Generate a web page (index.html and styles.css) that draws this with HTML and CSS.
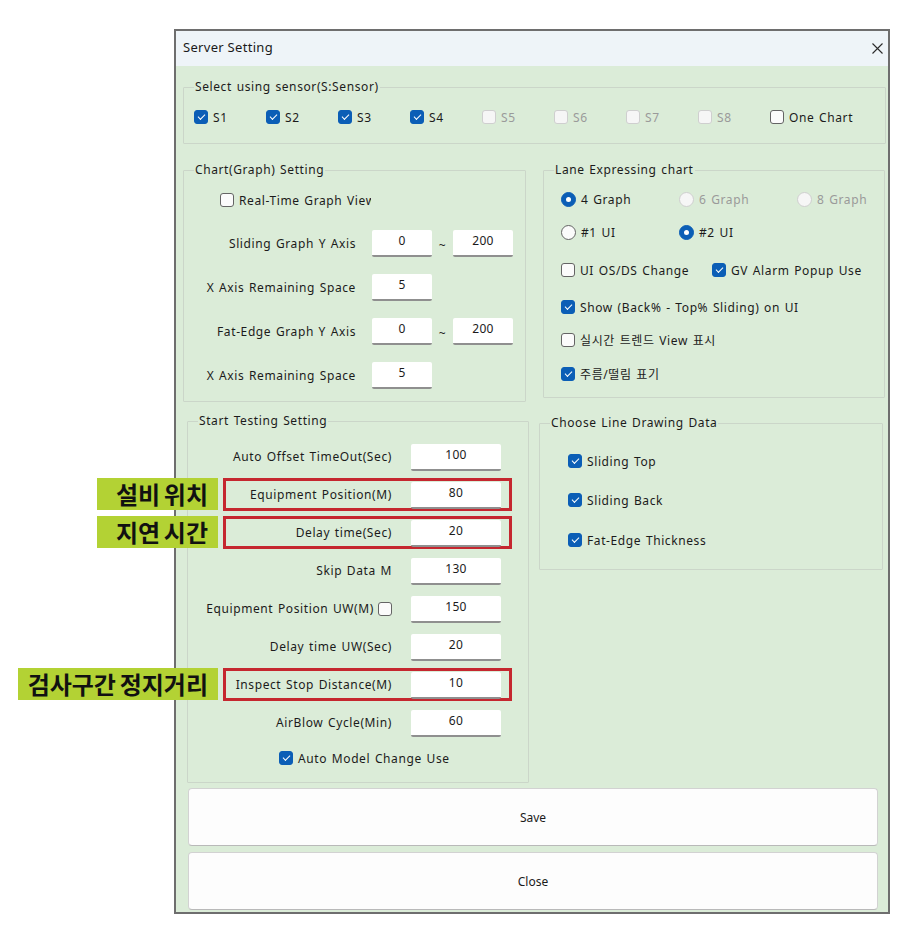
FILE: index.html
```html
<!DOCTYPE html>
<html lang="ko">
<head>
<meta charset="utf-8">
<title>Server Setting</title>
<link rel="stylesheet" href="styles.css">
</head>
<body>
<div class="window">
  <div class="titlebar">
    <span class="title">Server Setting</span>
    <svg class="close" width="11" height="11" viewBox="0 0 11 11"><path d="M0.5 0.5L10.5 10.5M10.5 0.5L0.5 10.5" stroke="#2b2b2b" stroke-width="1.1" fill="none"/></svg>
  </div>
  <div class="content">
    <fieldset class="group sensors">
      <legend>Select using sensor(S:Sensor)</legend>
      <div class="sensor-row">
        <label class="chk"><span class="box on"></span>S1</label>
        <label class="chk"><span class="box on"></span>S2</label>
        <label class="chk"><span class="box on"></span>S3</label>
        <label class="chk"><span class="box on"></span>S4</label>
        <label class="chk off"><span class="box"></span>S5</label>
        <label class="chk off"><span class="box"></span>S6</label>
        <label class="chk off"><span class="box"></span>S7</label>
        <label class="chk off"><span class="box"></span>S8</label>
        <label class="chk"><span class="box"></span>One Chart</label>
      </div>
    </fieldset>

    <div class="row2">
      <fieldset class="group chart">
        <legend>Chart(Graph) Setting</legend>
        <label class="chk realtime"><span class="box"></span><span class="clip">Real-Time Graph View</span></label>
        <div class="frow first">
          <span class="lbl">Sliding Graph Y Axis</span>
          <input class="field" value="0" readonly>
          <span class="tilde">~</span>
          <input class="field" value="200" readonly>
        </div>
        <div class="frow">
          <span class="lbl">X Axis Remaining Space</span>
          <input class="field" value="5" readonly>
        </div>
        <div class="frow">
          <span class="lbl">Fat-Edge Graph Y Axis</span>
          <input class="field" value="0" readonly>
          <span class="tilde">~</span>
          <input class="field" value="200" readonly>
        </div>
        <div class="frow">
          <span class="lbl">X Axis Remaining Space</span>
          <input class="field" value="5" readonly>
        </div>
      </fieldset>

      <fieldset class="group lane">
        <legend>Lane Expressing chart</legend>
        <div class="lrow radios r1">
          <label class="chk"><span class="radio on"></span>4 Graph</label>
          <label class="chk off"><span class="radio"></span>6 Graph</label>
          <label class="chk off"><span class="radio"></span>8 Graph</label>
        </div>
        <div class="lrow radios r2">
          <label class="chk"><span class="radio"></span>#1 UI</label>
          <label class="chk"><span class="radio on"></span>#2 UI</label>
        </div>
        <div class="lrow pair r3">
          <label class="chk"><span class="box"></span>UI OS/DS Change</label>
          <label class="chk"><span class="box on"></span>GV Alarm Popup Use</label>
        </div>
        <div class="lrow r4">
          <label class="chk"><span class="box on"></span>Show (Back% - Top% Sliding) on UI</label>
        </div>
        <div class="lrow r5">
          <label class="chk"><span class="box"></span>실시간 트렌드 View 표시</label>
        </div>
        <div class="lrow r6">
          <label class="chk"><span class="box on"></span>주름/떨림 표기</label>
        </div>
      </fieldset>
    </div>

    <div class="row3">
      <fieldset class="group testing">
        <legend>Start Testing Setting</legend>
        <div class="trow">
          <span class="lbl">Auto Offset TimeOut(Sec)</span>
          <input class="field" value="100" readonly>
        </div>
        <div class="trow hl">
          <span class="tag">설비 위치</span>
          <span class="lbl">Equipment Position(M)</span>
          <input class="field" value="80" readonly>
        </div>
        <div class="trow hl">
          <span class="tag">지연 시간</span>
          <span class="lbl">Delay time(Sec)</span>
          <input class="field" value="20" readonly>
        </div>
        <div class="trow">
          <span class="lbl">Skip Data M</span>
          <input class="field" value="130" readonly>
        </div>
        <div class="trow">
          <span class="lbl">Equipment Position UW(M)<span class="box"></span></span>
          <input class="field" value="150" readonly>
        </div>
        <div class="trow">
          <span class="lbl">Delay time UW(Sec)</span>
          <input class="field" value="20" readonly>
        </div>
        <div class="trow hl">
          <span class="tag">검사구간 정지거리</span>
          <span class="lbl">Inspect Stop Distance(M)</span>
          <input class="field" value="10" readonly>
        </div>
        <div class="trow">
          <span class="lbl">AirBlow Cycle(Min)</span>
          <input class="field" value="60" readonly>
        </div>
        <label class="chk automodel"><span class="box on"></span>Auto Model Change Use</label>
      </fieldset>

      <fieldset class="group lines">
        <legend>Choose Line Drawing Data</legend>
        <label class="chk d1"><span class="box on"></span>Sliding Top</label>
        <label class="chk d2"><span class="box on"></span>Sliding Back</label>
        <label class="chk d3"><span class="box on"></span>Fat-Edge Thickness</label>
      </fieldset>
    </div>

    <button class="btn save">Save</button>
    <button class="btn">Close</button>
  </div>
</div>
</body>
</html>
```

FILE: styles.css
```css
* { box-sizing: border-box; }

body {
  margin: 0;
  background: #ffffff;
  font-family: "Noto Sans", "Noto Sans CJK KR", sans-serif;
  font-size: 12px;
  letter-spacing: 0.6px;
  word-spacing: 1px;
  color: #1b1b1b;
}

.window {
  width: 716px;
  margin: 29px 0 0 174px;
  border: 2px solid #6e6e6e;
  background: #dbecd8;
}

.titlebar {
  height: 35px;
  background: #eef4f8;
  display: flex;
  align-items: center;
  justify-content: space-between;
  padding: 0 5px 3px 7px;
}

.title { font-size: 13px; letter-spacing: 0.3px; word-spacing: 0; color: #1a1a1a; }
.close { margin-top: 2px; }

.content { padding: 13px 0 2px 7px; }

.group {
  margin: 0;
  min-width: 0;
  border: 1px solid #cbd6c9;
  border-radius: 1px;
}

.group legend {
  padding: 0 1px;
  font-size: 12px;
  line-height: 16px;
}

/* ---------- checkbox & radio ---------- */
.chk {
  display: flex;
  align-items: center;
  gap: 5px;
  height: 20px;
  white-space: nowrap;
}

.box {
  position: relative;
  flex: none;
  width: 14px;
  height: 14px;
  border: 1px solid #646464;
  border-radius: 3px;
  background: #fbfbfb;
}

.box.on { background: #0b5eb6; border-color: #0b5eb6; }
.box.on::after {
  content: "";
  position: absolute;
  left: 3px;
  top: 3px;
  width: 6px;
  height: 3px;
  border-left: 1.1px solid #ffffff;
  border-bottom: 1.1px solid #ffffff;
  transform: rotate(-45deg);
}

.radio {
  position: relative;
  flex: none;
  width: 15px;
  height: 15px;
  border: 1px solid #646464;
  border-radius: 50%;
  background: #fbfbfb;
}

.radio.on { background: #0b5eb6; border-color: #0b5eb6; }
.radio.on::after {
  content: "";
  position: absolute;
  left: 4px;
  top: 4px;
  width: 5px;
  height: 5px;
  border-radius: 50%;
  background: #ffffff;
}

.chk.off { color: #9a9a9a; }
.chk.off .box,
.chk.off .radio { border-color: #cfcfcf; background: #f6f6f6; }

/* ---------- text fields ---------- */
.field {
  flex: none;
  height: 27px;
  border: none;
  border-bottom: 2px solid #8f8f8f;
  border-radius: 2px;
  background: #ffffff;
  font: inherit;
  letter-spacing: 0.3px;
  color: #1b1b1b;
  text-align: center;
  padding: 0 0 5px;
  outline: none;
}

/* ---------- sensors ---------- */
.sensors {
  width: 703px;
  padding: 12px 0 16px 10px;
}

.sensor-row {
  display: grid;
  grid-template-columns: repeat(8, 72px) auto;
  align-items: center;
}

/* ---------- row 2 ---------- */
.row2 {
  display: flex;
  align-items: flex-start;
  margin-top: 18px;
}

.chart {
  width: 343px;
  padding: 12px 0 12px 10px;
}

.realtime { margin-left: 26px; }
.clip {
  display: block;
  width: 132px;
  overflow: hidden;
}

.frow {
  display: flex;
  align-items: center;
  height: 27px;
  margin-top: 17px;
}
.frow.first { margin-top: 20px; }
.frow .lbl {
  width: 162px;
  margin-right: 16px;
  text-align: right;
  white-space: nowrap;
}
.frow .field { width: 60px; }
.tilde {
  width: 21px;
  text-align: center;
  padding-top: 3px;
}

.lane {
  width: 342px;
  margin-left: 17px;
  padding: 11px 0 13px 10px;
}

.lrow { margin-left: 7px; }
.lrow.radios { display: grid; grid-template-columns: 118px 118px auto; }
.lrow.pair { display: grid; grid-template-columns: 151px auto; }
.r2 { margin-top: 13px; }
.r3 { margin-top: 18px; }
.r4 { margin-top: 17px; }
.r5 { margin-top: 13px; }
.r6 { margin-top: 14px; }

/* ---------- row 3 ---------- */
.row3 {
  display: flex;
  align-items: flex-start;
  margin-top: 11px;
}

.testing {
  width: 342px;
  margin-left: 4px;
  padding: 11px 0 14px 10px;
}

.trow {
  position: relative;
  display: flex;
  align-items: center;
  width: 289px;
  height: 33px;
  margin-left: 25px;
  padding-right: 11px;
}
.trow + .trow { margin-top: 5px; }
.trow .lbl {
  flex: 1;
  min-width: 0;
  display: flex;
  justify-content: flex-end;
  align-items: center;
  gap: 4px;
  padding-right: 19px;
  white-space: nowrap;
}
.trow .field { width: 90px; margin-top: 2px; }

.trow.hl { box-shadow: inset 0 0 0 3px #c5272f; }

.tag {
  position: absolute;
  right: calc(100% + 5px);
  top: 0;
  min-width: 121px;
  height: 32px;
  padding: 0 10px;
  background: #b3d234;
  color: #111111;
  font-family: "Noto Sans CJK KR", sans-serif;
  font-weight: 700;
  font-size: 24px;
  letter-spacing: 0;
  word-spacing: -3px;
  line-height: 32px;
  text-align: right;
  white-space: nowrap;
}

.automodel { margin: 9px 0 0 81px; }

.lines {
  width: 344px;
  margin-left: 10px;
  margin-top: 2px;
  padding: 20px 0 19px 10px;
}
.lines .chk { margin-left: 18px; }
.lines .d2 { margin-top: 19px; }
.lines .d3 { margin-top: 20px; }

/* ---------- buttons ---------- */
.btn {
  display: block;
  width: 690px;
  height: 58px;
  margin: 5px 0 0 5px;
  background: #fdfdfd;
  border: 1px solid #d2d2d2;
  border-bottom-color: #b9b9b9;
  border-radius: 4px;
  font: inherit;
  color: #1b1b1b;
}
.btn + .btn { margin-top: 6px; }
```
